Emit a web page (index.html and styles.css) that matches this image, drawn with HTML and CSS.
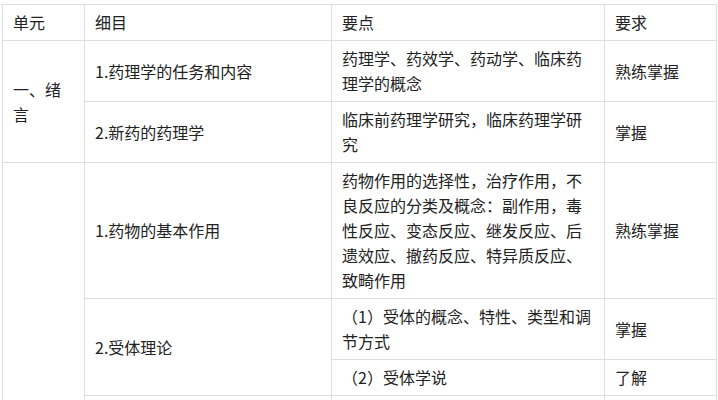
FILE: index.html
```html
<!DOCTYPE html>
<html lang="zh-CN">
<head>
<meta charset="utf-8">
<title>药理学 考试大纲</title>
<link rel="stylesheet" href="styles.css">
</head>
<body>
<table class="syllabus">
  <colgroup>
    <col class="c-unit">
    <col class="c-item">
    <col class="c-point">
    <col class="c-req">
  </colgroup>
  <tbody>
    <tr>
      <td>单元</td>
      <td>细目</td>
      <td>要点</td>
      <td>要求</td>
    </tr>
    <tr>
      <td rowspan="2">一、绪言</td>
      <td>1.药理学的任务和内容</td>
      <td>药理学、药效学、药动学、临床药理学的概念</td>
      <td>熟练掌握</td>
    </tr>
    <tr>
      <td>2.新药的药理学</td>
      <td>临床前药理学研究，临床药理学研究</td>
      <td>掌握</td>
    </tr>
    <tr>
      <td rowspan="13">二、药物效应动力学</td>
      <td>1.药物的基本作用</td>
      <td>药物作用的选择性，治疗作用，不良反应的分类及概念：副作用，毒性反应、变态反应、继发反应、后遗效应、撤药反应、特异质反应、致畸作用</td>
      <td>熟练掌握</td>
    </tr>
    <tr>
      <td rowspan="2">2.受体理论</td>
      <td>（1）受体的概念、特性、类型和调节方式</td>
      <td>掌握</td>
    </tr>
    <tr>
      <td>（2）受体学说</td>
      <td>了解</td>
    </tr>
    <tr>
      <td rowspan="3">3.药物与受体</td>
      <td>（1）激动药、拮抗药的概念及分类</td>
      <td>熟练掌握</td>
    </tr>
    <tr>
      <td>（2）亲和力、内在活性的概念</td>
      <td>掌握</td>
    </tr>
    <tr>
      <td>（3）受体的第二信使</td>
      <td>了解</td>
    </tr>
    <tr>
      <td rowspan="3">4.药物的量效关系</td>
      <td>（1）量反应、质反应的量效曲线及其意义</td>
      <td>掌握</td>
    </tr>
    <tr>
      <td>（2）效能、效价强度的概念</td>
      <td>熟练掌握</td>
    </tr>
    <tr>
      <td>（3）治疗指数、安全范围的概念</td>
      <td>熟练掌握</td>
    </tr>
    <tr>
      <td rowspan="4">5.影响药物效应的因素</td>
      <td>（1）药物方面的因素</td>
      <td>掌握</td>
    </tr>
    <tr>
      <td>（2）机体方面的因素</td>
      <td>掌握</td>
    </tr>
    <tr>
      <td>（3）耐受性与耐药性</td>
      <td>熟练掌握</td>
    </tr>
    <tr>
      <td>（4）药物依赖性</td>
      <td>了解</td>
    </tr>
  </tbody>
</table>
</body>
</html>
```

FILE: styles.css
```css
html, body {
  margin: 0;
  padding: 0;
  background: #ffffff;
}

body {
  padding: 4px 0 0 2px;
  font-family: "Microsoft YaHei", "Noto Sans CJK SC", sans-serif;
  font-size: 16px;
  color: #222222;
}

.syllabus {
  border-collapse: collapse;
  table-layout: fixed;
  width: 714px;
}

.c-unit { width: 82px; }
.c-item { width: 247px; }
.c-point { width: 273px; }
.c-req { width: 112px; }

.syllabus td {
  border: 1px solid #dddddd;
  padding: 5px 10px;
  line-height: 25px;
  vertical-align: middle;
  text-align: left;
  word-break: normal;
}
```
